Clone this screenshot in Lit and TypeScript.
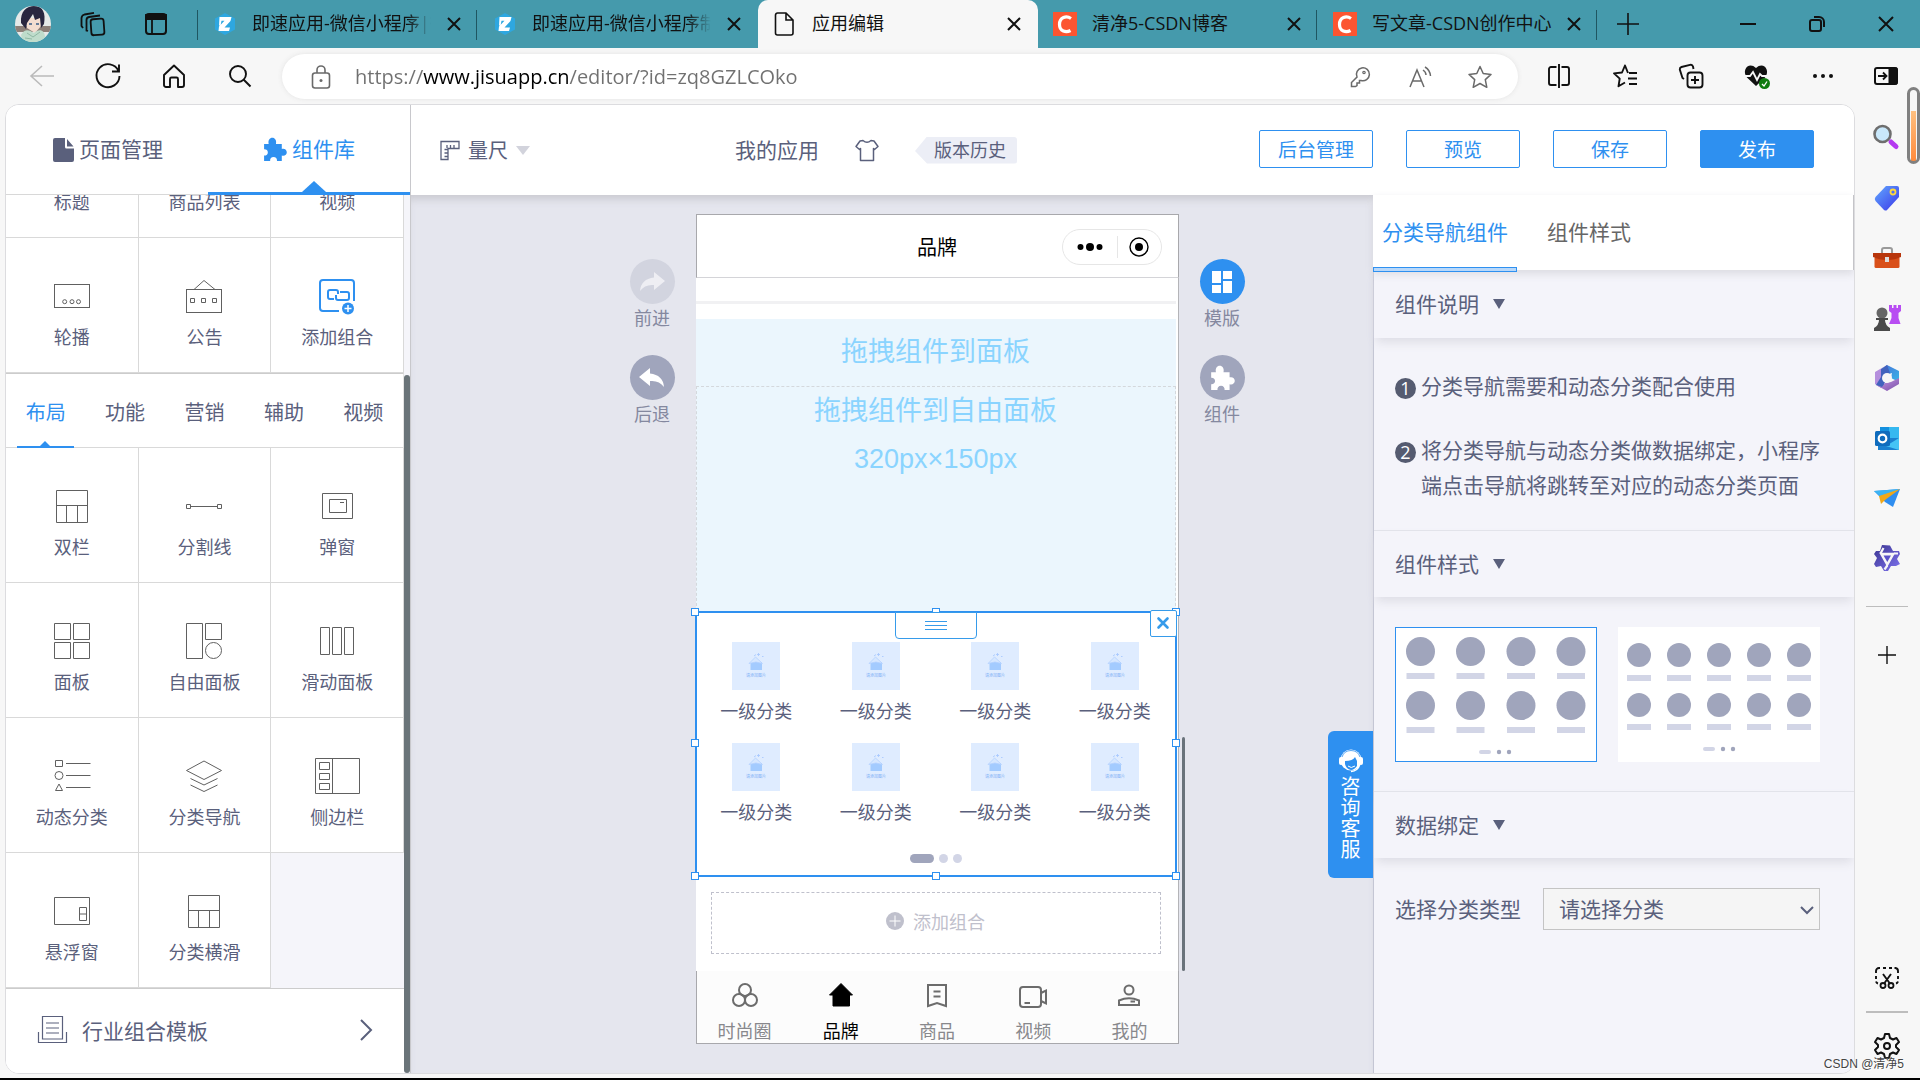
import { LitElement, html, css, svg, TemplateResult } from "lit";
import { customElement, state } from "lit/decorators.js";
import { classMap } from "lit/directives/class-map.js";

const icon = (w: number, h: number, body: unknown, cls = "") =>
  html`<svg class="ico ${cls}" width=${w} height=${h} viewBox="0 0 ${w} ${h}" aria-hidden="true">${body}</svg>`;

const base = css`
  :host, * { box-sizing: border-box; }
  button, select, input { font: inherit; color: inherit; margin: 0; padding: 0; border: 0; background: none; }
  button { cursor: pointer; }
  a { color: inherit; text-decoration: none; }
  .ico { display: block; flex: none; fill: none; stroke: currentColor; overflow: visible; }
`;

const puzzle = (size: number) => html`<svg class="ico" width=${size} height=${size} viewBox="0 0 24 24" aria-hidden="true">
  <path fill="currentColor" stroke="none" d="M2 6.600h4.400C5.600 3.200 7.500.8 9.900.8s4.300 2.400 3.500 5.800H19v4.800c2.700-.8 4.800.9 4.800 3.200s-2.100 4-4.800 3.200V23h-4.600c.2-2.400-1.200-3.900-3.300-3.900S7.600 20.600 7.800 23H2v-5.200c2.300.1 3.600-1.100 3.600-3s-1.300-3.100-3.600-3z"/>
</svg>`;

/* ---------- browser title bar and address bar ---------- */

const closeX = icon(14, 14, svg`<path d="M1 1L13 13M13 1L1 13" stroke-width="2"/>`);
const jisuLogo = icon(22, 24, svg`<path d="M11 1L21 6.500V17.500L11 23L1 17.500V6.500Z" fill="#2ea7e0" stroke="none"/><path d="M5.500 5H17.500L16.500 9L10.500 15.500H16L15 19H4.500L5 14.500L10.500 8.800H7.500L6.500 13.500H5Z" fill="#fff" stroke="none"/>`);
const csdnLogo = icon(22, 24, svg`<rect x="-1" width="24" height="24" fill="#fc5531" stroke="none"/><path d="M17 6.500C12.500 3.500 5.500 5 5.500 12.500C5.500 19.500 12 21 16.500 18.500" stroke="#fff" stroke-width="3.200"/>`);
const pageIcon = icon(22, 24, svg`<path d="M3.500 1H12L19 8V21A2 2 0 0 1 17 23H3.500A2 2 0 0 1 1.500 21V3A2 2 0 0 1 3.500 1ZM12 1V8H19" stroke-width="1.600"/>`);

interface Tab { title: string; logo: TemplateResult; active?: boolean; long?: boolean; }
const tabs: Tab[] = [
  { title: "即速应用-微信小程序|微信", logo: jisuLogo, long: true },
  { title: "即速应用-微信小程序制作", logo: jisuLogo, long: true },
  { title: "应用编辑", logo: pageIcon, active: true },
  { title: "清净5-CSDN博客", logo: csdnLogo },
  { title: "写文章-CSDN创作中心", logo: csdnLogo },
];

@customElement("browser-bar")
class BrowserBar extends LitElement {
  static styles = [base, css`
    :host { display: block; font-family: "Open Sans", "Noto Sans CJK SC", sans-serif; color: #111; }
    .titlebar { height: 48px; background: #459aac; display: flex; align-items: stretch; }
    .lead { width: 198px; display: flex; align-items: center; padding-left: 15px; gap: 39px; flex: none; }
    .lead .avatar { margin-right: -10px; }
    .tab { width: 280px; flex: 0 1 280px; min-width: 0; display: flex; align-items: center; padding: 0 17px 0 16px; gap: 16px; position: relative; }
    .tab::after { content: ""; position: absolute; right: 1px; top: 10px; width: 1px; height: 30px; background: #1f5661; }
    .tab.first::before { content: ""; position: absolute; left: -1px; top: 10px; width: 1px; height: 30px; background: #1f5661; }
    .tab.before::after, .tab.active::after { display: none; }
    .tab.active { background: #f7f7f7; border-radius: 10px 10px 0 0; }
    .tab .label { flex: 1; min-width: 0; text-align: left; font-size: 18px; line-height: 44px; height: 48px; padding-bottom: 3px; white-space: nowrap; display: block; }
    .tab .label.long { overflow: hidden; -webkit-mask-image: linear-gradient(90deg, #000 calc(100% - 24px), transparent); mask-image: linear-gradient(90deg, #000 calc(100% - 24px), transparent); }
    .plus { display: flex; align-items: center; width: 60px; justify-content: center; }
    .win { margin-left: auto; display: flex; }
    .win button { width: 69px; display: grid; place-items: center; }
    .toolbar { height: 56px; background: #f7f7f7; display: flex; align-items: center; }
    .nav { display: flex; width: 282px; padding-left: 9px; flex: none; }
    .nav button, .acts button { width: 66px; height: 44px; display: grid; place-items: center; }
    .nav .off { color: #bbb; }
    .address { flex: 1; height: 45px; background: #fff; border-radius: 23px; display: flex; align-items: center; padding: 0 8px 0 29px; box-shadow: 0 0 5px #e3e3e3; color: #6a6a6a; margin-top: 1px; }
    .address input { flex: 1; min-width: 0; height: 40px; margin-left: 24px; font-size: 20px; outline: none;
      background: linear-gradient(90deg, #707070 68px, #000 68px, #000 213px, #707070 213px); -webkit-background-clip: text; background-clip: text; -webkit-text-fill-color: transparent; }
    .address button { width: 60px; height: 40px; display: grid; place-items: center; }
    .acts { display: flex; padding-left: 8px; width: 402px; flex: none; }
    .acts button:last-child { width: 60px; }
  `];
  render() {
    return html`
      <header class="titlebar">
        <div class="lead">
          <svg class="ico avatar" width="36" height="36" viewBox="0 0 36 36" aria-hidden="true">
            <defs><clipPath id="av"><circle cx="18" cy="18" r="18"/></clipPath></defs>
            <g clip-path="url(#av)" stroke="none">
              <rect width="36" height="36" fill="#e6e9e8"/><rect y="20" width="36" height="6" fill="#8d7f78"/>
              <path d="M10 12H26V20L20 27L12 22Z" fill="#f3ddd0"/>
              <path d="M6 17C5 5 12 0 19 0C28 0 31 7 29 18L26 22L25 12L20 14L18 8L12 17L11 23Z" fill="#29263f"/>
              <path d="M6 29C10 22 14 24 19 27C24 22 30 24 30 31L27 36H8Z" fill="#bfdccb"/>
              <path d="M12 27L18 31L25 26M10 32L17 33" stroke="#8fb8a3" fill="none"/>
              <path d="M14 18H17M21 18H24" stroke="#3a5c86" stroke-width="1.500"/>
            </g>
          </svg>
          ${icon(26, 24, svg`<rect x="11" y="7" width="13" height="16" rx="2.500" transform="rotate(-4 17 15)" stroke-width="1.800"/><path d="M8 19L6.500 18.500V8A3 3 0 0 1 9 5L20 3.500M3 16L1.500 14V6A4 4 0 0 1 4.500 2.500L14 .8" stroke-width="1.800"/>`)}
          ${icon(22, 22, svg`<rect x="1" y="1" width="20" height="20" rx="3" stroke-width="2"/><path d="M1 2H21V6H1ZM7 6V21" fill="currentColor" stroke-width="1.800"/>`)}
        </div>
        ${tabs.map((t, i) => html`
          <div class="tab ${classMap({ active: !!t.active, first: i === 0, before: i === 1 })}">
            ${t.logo}<button class="label ${t.long ? "long" : ""}" role="tab" aria-selected=${t.active ? "true" : "false"}>${t.title}</button>
            <button aria-label="关闭标签页">${closeX}</button>
          </div>`)}
        <button class="plus" aria-label="新建标签页">${icon(22, 22, svg`<path d="M11 0V22M0 11H22" stroke-width="1.600"/>`)}</button>
        <div class="win">
          <button aria-label="最小化">${icon(16, 16, svg`<path d="M0 8H16" stroke-width="2"/>`)}</button>
          <button aria-label="还原">${icon(16, 16, svg`<rect x="1" y="4" width="11" height="11" rx="2" stroke-width="2"/><path d="M5 1H10A5 5 0 0 1 15 6V11" stroke-width="2"/>`)}</button>
          <button aria-label="关闭">${icon(16, 16, svg`<path d="M1 1L15 15M15 1L1 15" stroke-width="2"/>`)}</button>
        </div>
      </header>
      <div class="toolbar">
        <nav class="nav">
          <button class="off" aria-label="后退">${icon(24, 22, svg`<path d="M24 11H1M12 1L1 11L12 21" stroke-width="1.600"/>`)}</button>
          <button aria-label="刷新">${icon(26, 26, svg`<path d="M23.500 8A11.500 11.500 0 1 0 24.500 13M24 1.500V8.500H17" stroke-width="1.900"/>`)}</button>
          <button aria-label="主页">${icon(22, 24, svg`<path d="M1 11L11 1.500L21 11V21A2 2 0 0 1 19 23H15V15A1.500 1.500 0 0 0 13.500 13.500H8.500A1.500 1.500 0 0 0 7 15V23H3A2 2 0 0 1 1 21Z" stroke-width="1.900" stroke-linejoin="round"/>`)}</button>
          <button aria-label="搜索">${icon(22, 22, svg`<circle cx="9" cy="9" r="8" stroke-width="1.900"/><path d="M14.500 14.500L21.500 21.500" stroke-width="1.900"/>`)}</button>
        </nav>
        <div class="address">
          ${icon(20, 24, svg`<rect x="1.500" y="8" width="17" height="15" rx="2.500" stroke-width="1.600"/><path d="M6 8V5A4 4 0 0 1 14 5V8" stroke-width="1.600"/><circle cx="10" cy="15.500" r="1.500" fill="currentColor" stroke="none"/>`)}
          <input aria-label="地址栏" spellcheck="false" value="https://www.jisuapp.cn/editor/?id=zq8GZLCOko" />
          <button aria-label="密码">${icon(20, 20, svg`<path d="M7 10A6.500 6.500 0 1 1 11 13.500H9.500V16H7V18.500L5.500 19.500H1.500V15.500Z" stroke-width="1.500"/><circle cx="14" cy="5.500" r="1.200" stroke-width="1.200"/>`)}</button>
          <button aria-label="朗读">${icon(22, 22, svg`<path d="M1 21L8 4L15 21M3.500 15H12.500M14 4Q17 6 17 9M16 1Q21 4 21.500 10" stroke-width="1.500"/>`)}</button>
          <button aria-label="收藏">${icon(24, 24, svg`<path d="M12 1.500L15.200 8.500L23 9.400L17.300 14.600L18.800 22.300L12 18.500L5.200 22.300L6.700 14.600L1 9.400L8.800 8.500Z" stroke-width="1.500" stroke-linejoin="round"/>`)}</button>
        </div>
        <div class="acts">
          <button aria-label="拆分窗口">${icon(22, 24, svg`<path d="M11 0V24M8.500 3H3A2 2 0 0 0 1 5V19A2 2 0 0 0 3 21H8.500M13.500 3H19A2 2 0 0 1 21 5V19A2 2 0 0 1 19 21H13.500" stroke-width="1.900"/>`)}</button>
          <button aria-label="收藏夹">${icon(24, 24, svg`<path d="M15 9L12 1.500L9 8.500L1 9.400L6.700 14.600L5.500 22.300L12 18.500M16 9H24M15 14.500H24M16 20H24" stroke-width="1.900" stroke-linejoin="round"/>`)}</button>
          <button aria-label="集锦">${icon(24, 24, svg`<rect x="8.500" y="8.500" width="15" height="15" rx="3" stroke-width="1.900"/><path d="M16 12V20M12 16H20M5 15L3.500 14L.8 5.500A2.500 2.500 0 0 1 2.500 3L11 .8A2.500 2.500 0 0 1 14 2.500L14.500 5" stroke-width="1.900"/>`)}</button>
          <button aria-label="浏览器概要">${icon(26, 24, svg`<path d="M12 22L3 13.500C-3 6 5-3 12 4C19-3 27 6 21 13.500Z" fill="currentColor" stroke="none"/><path d="M0 12H6L9 8L13 16L16 10L18 12H24" stroke="#f7f7f7" stroke-width="1.800"/><circle cx="20.500" cy="19.500" r="5.500" fill="#107c10" stroke="none"/><path d="M18 20L20 22L23 17.500" stroke="#fff" stroke-width="1.300"/>`)}</button>
          <button aria-label="更多">${icon(22, 6, svg`<g fill="currentColor" stroke="none"><circle cx="3" cy="3" r="2"/><circle cx="11" cy="3" r="2"/><circle cx="19" cy="3" r="2"/></g>`)}</button>
          <button aria-label="侧栏">${icon(24, 18, svg`<rect x="1" y="1" width="22" height="16" rx="2" stroke-width="2"/><path d="M15 1H23V17H15Z" fill="currentColor"/><path d="M4 9H12M9 5.500L12.500 9L9 12.500" stroke-width="1.800"/>`)}</button>
        </div>
      </div>`;
  }
}

/* ---------- left component library ---------- */

const cellIcons: Record<string, unknown> = {
  轮播: svg`<rect x=".5" y="6.500" width="35" height="23"/><circle cx="10.700" cy="23.700" r="2"/><circle cx="18" cy="23.700" r="2"/><circle cx="24.500" cy="23.700" r="2"/>`,
  公告: svg`<rect x=".5" y="11.500" width="35" height="23"/><path d="M8 11.500L18 2.500L29 11.500"/><path d="M4.500 20.500H8.500V24.500H4.500ZM15.500 20.500H19.500V24.500H15.500ZM26.500 20.500H30.500V24.500H26.500Z"/>`,
  添加组合: svg`<g stroke="#2e90f0" stroke-width="2"><path d="M20 33H4A3 3 0 0 1 1 30V5A3 3 0 0 1 4 2H32A3 3 0 0 1 35 5V23"/><path d="M15 21H11A2 2 0 0 1 9 19V14A2 2 0 0 1 11 12H17A2 2 0 0 1 19 14V16M21 14H28A2 2 0 0 1 30 16V20A2 2 0 0 1 28 22H19A2 2 0 0 1 17 20V17"/></g><circle cx="29" cy="30.500" r="6" fill="#2e90f0" stroke="none"/><path d="M29 27V34M25.500 30.500H32.500" stroke="#fff" stroke-width="1.500"/>`,
  双栏: svg`<path d="M2.500 2.500H33.500V34.500H2.500ZM2.500 17.500H33.500M12.500 17.500V34.500M23.500 17.500V34.500"/>`,
  分割线: svg`<path d="M.5 16.500H4.500V20.500H.5ZM31.500 16.500H35.500V20.500H31.500ZM4.500 18.500H31.500"/>`,
  弹窗: svg`<path d="M3.500 5.500H33.500V30.500H3.500ZM10.500 11.500H27.500V24.500H10.500ZM21 14.500H25"/>`,
  面板: svg`<path d="M.5 .5H16.500V16.500H.5ZM19.500 .5H35.500V16.500H19.500ZM.5 19.500H16.500V35.500H.5ZM19.500 19.500H35.500V35.500H19.500Z"/>`,
  自由面板: svg`<path d="M.5 .5H16.500V35.500H.5ZM19.500 .5H35.500V16.500H19.500Z"/><circle cx="27.500" cy="27.500" r="8"/>`,
  滑动面板: svg`<path d="M1.500 4.500H10.500V31.500H1.500ZM13.500 4.500H22.500V31.500H13.500ZM25.500 4.500H34.500V31.500H25.500Z"/>`,
  动态分类: svg`<path d="M1.500 2.500H8.500V8.500H1.500ZM12 5.500H36.500M12 17.500H36.500M12 29.500H36.500M5 26L8.500 32.500H1.500Z"/><circle cx="5" cy="17.500" r="4"/>`,
  分类导航: svg`<path d="M18 3L35.500 12.500L18 21.500L.5 12.500ZM4.500 20.500L18 27L31.500 20.500M4.500 27L18 33.500L31.500 27"/>`,
  侧边栏: svg`<path d="M-3.500 .5H40.500V35.500H-3.500ZM13.500 .5V35.500M.5 4.500H10.500V11.500H.5ZM.5 15.500H10.500V21.500H.5ZM.5 25.500H10.500V31.500H.5Z"/>`,
  悬浮窗: svg`<path d="M.5 4.500H35.500V31.500H.5ZM25.500 14.500H32.500V27.500H25.500ZM25.500 21H32.500"/>`,
};
cellIcons["分类横滑"] = cellIcons["双栏"];

@customElement("component-library")
class ComponentLibrary extends LitElement {
  @state() private category = "布局";
  static styles = [base, css`
    :host { display: flex; flex-direction: column; width: 405px; flex: none; border-right: 1px solid #c8c8cc; background: #fff; color: #5a607c; }
    .top { display: grid; grid-template-columns: 1fr 1fr; height: 90px; border-bottom: 1px solid #d8d8d8; }
    .top button { display: flex; align-items: center; font-size: 21px; line-height: 30px; padding-bottom: 3px; gap: 5px; }
    .top .pages { padding-left: 47px; }
    .top .lib { color: #2e90f0; padding-left: 54px; position: relative; }
    .top .lib::before { content: ""; position: absolute; left: 0; right: 0; bottom: -1px; height: 3px; background: #2e90f0; }
    .top .lib::after { content: ""; position: absolute; left: 94px; bottom: 2px; border: 12px solid transparent; border-top: 0; border-bottom: 11px solid #2e90f0; }
    .top .ico { margin-top: 3px; }
    .body { flex: 1; display: flex; flex-direction: column; background: #f5f5fa; padding-right: 6px; position: relative; }
    .bar { position: absolute; right: 0; top: 180px; bottom: 0; width: 6px; border-radius: 3px; background: #6a7479; }
    .grid { display: grid; grid-template-columns: repeat(3, 1fr); }
    .cell { height: 135px; display: flex; flex-direction: column; align-items: center; justify-content: flex-end; padding-bottom: 24px; gap: 10px; font-size: 18px; line-height: 24px; background: #fff; border-right: 1px solid #d9d9d9; border-bottom: 1px solid #d9d9d9; overflow: hidden; white-space: nowrap; }
    .cell .ico { color: #606060; }
    .cell.cut { height: 43px; }
    .cats { display: grid; grid-template-columns: repeat(5, 1fr); height: 75px; border-top: 1px solid #ccc; border-bottom: 1px solid #d9d9d9; background: #fff; border-right: 1px solid #e4e4e4; }
    .cats button { font-size: 20px; line-height: 30px; padding-top: 2px; position: relative; }
    .cats .on { color: #2e90f0; }
    .cats .on::before { content: ""; position: absolute; left: 11px; right: 11px; bottom: -1px; height: 2px; background: #2e90f0; }
    .cats .on::after { content: ""; position: absolute; left: calc(50% - 7px); bottom: 0; border: 6px solid transparent; border-top: 0; border-bottom-color: #2e90f0; }
    .foot { flex: 1; min-height: 84px; display: flex; align-items: center; background: #fff; border-top: 1px solid #ccc; padding: 0 32px 2px 32px; font-size: 21px; line-height: 30px; gap: 15px; }
    .foot .more { margin-left: auto; }
  `];
  private cell(name: string) {
    return html`<button class="cell">${icon(36, 36, cellIcons[name])}<span>${name}</span></button>`;
  }
  render() {
    const layout = ["双栏", "分割线", "弹窗", "面板", "自由面板", "滑动面板", "动态分类", "分类导航", "侧边栏", "悬浮窗", "分类横滑"];
    return html`
      <div class="top" role="tablist">
        <button class="pages" role="tab" aria-selected="false">
          ${icon(21, 24, svg`<path d="M2 0H12V9A1.500 1.500 0 0 0 13.500 10.500H21V22A2 2 0 0 1 19 24H2A2 2 0 0 1 0 22V2A2 2 0 0 1 2 0ZM14 1L20.500 8.500H14Z" fill="currentColor" stroke="none"/>`)}页面管理
        </button>
        <button class="lib" role="tab" aria-selected="true">${puzzle(25)}组件库</button>
      </div>
      <div class="body">
        <div class="grid">
          ${["标题", "商品列表", "视频"].map((n) => html`<button class="cell cut"><span>${n}</span></button>`)}
          ${["轮播", "公告", "添加组合"].map((n) => this.cell(n))}
        </div>
        <div class="cats" role="tablist">
          ${["布局", "功能", "营销", "辅助", "视频"].map((n) => html`
            <button role="tab" class=${n === this.category ? "on" : ""} aria-selected=${n === this.category ? "true" : "false"} @click=${() => (this.category = n)}>${n}</button>`)}
        </div>
        <div class="grid">${layout.map((n) => this.cell(n))}</div>
        <button class="foot">
          ${icon(29, 28, svg`<path d="M4.500 .5H24.500V23H4.500ZM8 7H21M8 12H21M8 17H21M.5 16V26.500H28.500V16" stroke-width="1.200"/>`)}
          行业组合模板
          ${icon(12, 22, svg`<path d="M1 1L11 11L1 21" stroke-width="2"/>`, "more")}
        </button>
        <div class="bar"></div>
      </div>`;
  }
}

/* ---------- phone preview ---------- */

@customElement("phone-preview")
class PhonePreview extends LitElement {
  static styles = [base, css`
    :host { display: block; width: 483px; position: relative; color: #5a607c; }
    .head { height: 64px; border: 1px solid #a8a8ac; border-bottom-color: #d4d4d8; background: #fff; display: grid; grid-template-columns: 1fr auto 1fr; align-items: center; color: #000; font-size: 20px; line-height: 30px; padding-top: 1px; }
    .capsule { justify-self: end; margin-right: 16px; width: 100px; height: 36px; border: 1px solid #e6e6e6; border-radius: 18px; display: grid; grid-template-columns: 54px 1fr; align-items: center; justify-items: center; }
    .capsule button { width: 100%; height: 22px; display: grid; place-items: center; }
    .capsule button + button { border-left: 1px solid #e6e6e6; }
    .scroll { background: #fff; border-right: 1px solid #b4b4b8; padding: 23px 2px 17px 0; }
    .rule { height: 3px; background: #f1f1f3; margin-bottom: 15px; }
    .drop { background: #ebf6fd; color: #8ad4ff; font: 27px/48px "Liberation Sans", "Noto Sans CJK SC", sans-serif; text-align: center; }
    .panel { height: 67px; line-height: 66px; }
    .free { height: 225px; border: 1px dashed #d4d8dc; border-bottom: 0; }
    .block { position: relative; margin: 0 -1px; border: 2px solid #2e90f0; padding: 29px 0 12px; background: #fff; }
    .items { display: grid; grid-template-columns: repeat(4, 1fr); row-gap: 21px; }
    .item { display: flex; flex-direction: column; align-items: center; gap: 8px; font-size: 18px; line-height: 24px; }
    .pic { display: block; background: #dfecff; }
    .tiny { font: 4px "Noto Sans CJK SC", sans-serif; fill: #7fb0f6; }
    .pager { display: flex; justify-content: center; gap: 5px; margin-top: 31px; }
    .pager i { width: 9px; height: 9px; border-radius: 5px; background: #d2d5e6; }
    .pager i.on { width: 24px; background: #a0a5bc; }
    .grip { position: absolute; left: 50%; top: -1px; margin-left: -41px; width: 82px; height: 27px; border: 1px solid #369bea; border-radius: 0 0 4px 4px; background: #fff; display: grid; place-items: center; color: #369bea; }
    .close { position: absolute; right: -2px; top: -3px; width: 27px; height: 27px; border: 1px solid #369bea; border-radius: 2px; background: #fff; display: grid; place-items: center; color: #369bea; padding-bottom: 2px; }
    .h { position: absolute; width: 8px; height: 8px; border: 1px solid #2e90f0; background: #fff; }
    .n { top: -5px; } .s { bottom: -5px; } .m { top: calc(50% - 5px); }
    .w { left: -6px; } .e { right: -5px; } .c { left: calc(50% - 4px); }
    .add { width: calc(100% - 30px); height: 62px; margin: 15px 15px 0; border: 1px dashed #bfc0cc; display: flex; align-items: center; justify-content: center; gap: 9px; color: #bfc0cc; font-size: 18px; line-height: 24px; padding-bottom: 4px; }
    .tabs { height: 73px; background: #fcfcfc; border: 1px solid #a8a8ac; border-top: 0; display: grid; grid-template-columns: repeat(5, 1fr); }
    .tabs a { display: flex; flex-direction: column; align-items: center; justify-content: flex-end; font-size: 18px; line-height: 24px; gap: 10px; padding-bottom: 1px; color: #88888c; }
    .tabs a .ico { color: #6c6c6c; }
    .tabs a.on, .tabs a.on .ico { color: #000; }
    .bar { position: absolute; right: -6px; top: 523px; bottom: 73px; width: 3px; border-radius: 2px; background: #6a737b; }
  `];
  private pic() {
    return html`<svg class="pic" width="48" height="48" viewBox="0 0 48 48" role="img" aria-label="请添加图片">
      <rect x="18.500" y="20" width="11.500" height="8" fill="#a3cbff"/><path d="M17 21.500L23.500 15L30.500 21.500L24 20Z" fill="#d6e7ff" stroke="#b3d0ff" stroke-width=".8"/>
      <path d="M26.500 11V14M25 12.500H28M30 14.500H31.500M22 14L24 12.500" stroke="#a9c9ff" stroke-width=".9"/>
      <text class="tiny" x="14" y="34.500">请添加图片</text></svg>`;
  }
  render() {
    const nav: [string, unknown][] = [
      ["时尚圈", svg`<circle cx="14" cy="8" r="6"/><circle cx="8" cy="18" r="6"/><circle cx="20" cy="18" r="6"/>`],
      ["品牌", svg`<path d="M14 1.500L2.500 13H6V24H22.500V13H25.500Z" fill="currentColor" stroke-linejoin="round" stroke-width="1"/>`],
      ["商品", svg`<path d="M5 3H23V24L14 21L5 24ZM10.500 9.500H17.500M10.500 14.500H17.500"/>`],
      ["视频", svg`<rect x="1" y="5" width="21" height="20" rx="3"/><path d="M22 11L27 8.500V21.500L22 19M5.500 21H11"/>`],
      ["我的", svg`<circle cx="14" cy="8" r="4.500"/><path d="M4 23V18.500Q14 14 24 18.500V23ZM15.500 19.500H20"/>`],
    ];
    return html`
      <div class="head">
        <span></span><span>品牌</span>
        <div class="capsule">
          <button aria-label="更多">${icon(26, 10, svg`<g fill="#000" stroke="none"><circle cx="3.500" cy="5" r="3"/><circle cx="13" cy="5" r="4"/><circle cx="22.500" cy="5" r="3"/></g>`)}</button>
          <button aria-label="关闭小程序">${icon(20, 20, svg`<circle cx="10" cy="10" r="9" stroke="#000" stroke-width="1.400"/><circle cx="10" cy="10" r="4" fill="#000" stroke="none"/>`)}</button>
        </div>
      </div>
      <div class="scroll">
        <div class="rule"></div>
        <div class="drop panel">拖拽组件到面板</div>
        <div class="drop free">拖拽组件到自由面板<br />320px×150px</div>
        <section class="block">
          <div class="items">${Array.from({ length: 8 }, () => html`<div class="item">${this.pic()}<span>一级分类</span></div>`)}</div>
          <div class="pager"><i class="on"></i><i></i><i></i></div>
          ${["n w", "n c", "n e", "m w", "m e", "s w", "s c", "s e"].map((p) => html`<span class="h ${p}"></span>`)}
          <button class="grip" aria-label="拖动">${icon(22, 9, svg`<path d="M0 .5H22M0 4.500H22M0 8.500H22"/>`)}</button>
          <button class="close" aria-label="删除">${icon(12, 12, svg`<path d="M1.500 1.500L10.500 10.500M10.500 1.500L1.500 10.500" stroke-width="2.600" stroke-linecap="round"/>`)}</button>
        </section>
        <button class="add">${icon(18, 18, svg`<circle cx="9" cy="9" r="9" fill="#bfc0cc" stroke="none"/><path d="M9 3.500V14.500M3.500 9H14.500" stroke="#fff"/>`)}添加组合</button>
      </div>
      <nav class="tabs">
        ${nav.map(([n, d]) => html`<a href="#" class=${n === "品牌" ? "on" : ""}><svg class="ico" width="28" height="26" viewBox="0 0 28 26" stroke-width="2" aria-hidden="true">${d}</svg>${n}</a>`)}
      </nav>
      <div class="bar"></div>`;
  }
}

/* ---------- right settings panel ---------- */

const thumb = (xs: number[], ys: number[], bars: number[], r: number, w: number, pagerX: number, pagerY: number) =>
  html`<svg class="ico" width="202" height="135" viewBox="0 0 202 135" aria-hidden="true"><g stroke="none">
    ${ys.map((y, i) => xs.map((x) => svg`<circle cx=${x} cy=${y} r=${r} fill="#a0a5bc"/><rect x=${x - w / 2} y=${bars[i]} width=${w} height="6" fill="#d2d5e6"/>`))}
    <rect x=${pagerX} y=${pagerY - 2} width="12" height="4" rx="2" fill="#d2d5e6"/><circle cx=${pagerX + 20} cy=${pagerY} r="2.200" fill="#a0a5bc"/><circle cx=${pagerX + 30} cy=${pagerY} r="2.200" fill="#a0a5bc"/>
  </g></svg>`;

@customElement("settings-panel")
class SettingsPanel extends LitElement {
  @state() private style4 = true;
  static styles = [base, css`
    :host { display: block; width: 481px; flex: none; background: #f4f4fa; color: #5a607c; font-size: 21px; line-height: 35px; position: relative; border-left: 1px solid #c4c6d4; }
    .tabs { display: flex; gap: 20px; height: 75px; margin-left: -1px; background: #fff; border-right: 1px solid #c4c4c8; box-shadow: 0 4px 8px #dcdce2; position: relative; }
    .tabs button { padding: 0 10px 3px; color: #666; position: relative; }
    .tabs .on { color: #2e90f0; width: 144px; padding-left: 9px; text-align: left; white-space: nowrap; }
    .tabs .on::after { content: ""; position: absolute; left: 0; right: 0; bottom: -2px; height: 3px; border: 1px solid #2e90f0; background: #b8d8fa; }
    .sec { width: 100%; height: 67px; display: flex; align-items: center; gap: 14px; padding: 0 21px 2px; box-shadow: 0 6px 10px -2px #dcdce4; border-top: 1px solid #e2e3ea; }
    .sec.first { height: 68px; border-top: 0; }
    .sec i { border: 6px solid transparent; border-top: 10px solid #5a607c; border-bottom: 0; margin-top: 2px; }
    ol { list-style: none; margin: 0; padding: 30px 21px 28px; display: grid; gap: 29px; }
    li { display: flex; gap: 5px; }
    .num { flex: none; width: 21px; height: 21px; border-radius: 50%; margin-top: 10px; background: #555b70; color: #fff; font: 18px/21px "Open Sans", sans-serif; text-align: center; }
    .thumbs { display: grid; grid-template-columns: 202px 202px; gap: 21px; padding: 30px 21px 29px; }
    .thumbs button { height: 135px; background: #fff; }
    .thumbs button.on { outline: 1px solid #2e90f0; outline-offset: -1px; }
    .field { display: flex; align-items: center; justify-content: space-between; padding: 30px 34px 30px 21px; }
    .field label { padding-bottom: 2px; }
    .pick { position: relative; width: 277px; display: block; }
    .pick select { appearance: none; display: block; width: 100%; height: 42px; border: 1px solid #c4c4c4; background: #f5f5f5; padding: 0 30px 2px 15px; }
    .pick .ico { position: absolute; right: 6px; top: 18px; pointer-events: none; }
    .service { position: absolute; left: -46px; top: 536px; width: 45px; height: 147px; border-radius: 6px 0 0 6px; background: #2e90f0; color: #fff; font-size: 20px; line-height: 21px; display: flex; flex-direction: column; align-items: center; padding: 18px 12px 0; gap: 2px; }
    .service span { width: 21px; word-break: break-all; }
  `];
  render() {
    return html`
      <div class="tabs" role="tablist">
        <button class="on" role="tab" aria-selected="true">分类导航组件</button>
        <button role="tab" aria-selected="false">组件样式</button>
      </div>
      <button class="sec first">组件说明<i></i></button>
      <ol>
        <li><span class="num">1</span><span>分类导航需要和动态分类配合使用</span></li>
        <li><span class="num">2</span><span>将分类导航与动态分类做数据绑定，小程序端点击导航将跳转至对应的动态分类页面</span></li>
      </ol>
      <button class="sec">组件样式<i></i></button>
      <div class="thumbs">
        <button aria-label="每行四个" class=${this.style4 ? "on" : ""} @click=${() => (this.style4 = true)}>${thumb([25.5, 75.5, 126, 176], [24.5, 78.5], [46, 100], 14.5, 28, 84, 125)}</button>
        <button aria-label="每行五个" class=${this.style4 ? "" : "on"} @click=${() => (this.style4 = false)}>${thumb([21, 61, 101, 141, 181], [28, 78], [48, 97], 12, 24, 85, 122)}</button>
      </div>
      <button class="sec">数据绑定<i></i></button>
      <div class="field">
        <label for="kind">选择分类类型</label>
        <div class="pick">
          <select id="kind"><option>请选择分类</option></select>
          ${icon(14, 8, svg`<path d="M1 1L7 7L13 1" stroke-width="2"/>`)}
        </div>
      </div>
      <button class="service">
        ${icon(24, 24, svg`<g stroke="none"><circle cx="12" cy="11" r="10.500" fill="#fff"/><rect y="8" width="4" height="8" rx="2" fill="#fff"/><rect x="20" y="8" width="4" height="8" rx="2" fill="#fff"/><path d="M6 12Q14 12 16 8L18 12V17Q15 21 12 21Q7 20 6 15Z" fill="#2e90f0"/><path d="M9 17Q12 20 16 17" stroke="#fff" fill="none"/></g><path d="M3 8A9.500 9.500 0 0 1 21 8" stroke="#2e90f0" stroke-width=".8"/><path d="M12 22.500Q19 22 21 15" stroke="#fff" stroke-width="1.300"/>`)}
        <span>咨询客服</span>
      </button>`;
  }
}

/* ---------- browser side strip ---------- */

@customElement("side-strip")
class SideStrip extends LitElement {
  static styles = [base, css`
    :host { display: flex; flex-direction: column; width: 65px; flex: none; align-items: center; color: #111; position: relative; padding: 4px 2px 2px 0; }
    button { width: 40px; height: 60px; display: grid; place-items: center; flex: none; }
    hr { width: 42px; border: 0; border-top: 1px solid #bdbdbd; margin: 0; }
    .line { margin: 18px 0 18px; }
    .bottom { margin-top: auto; display: flex; flex-direction: column; align-items: center; }
    .bottom hr { border-top-width: 2px; margin: 3px 0; }
    .thumb { position: absolute; right: 0; top: -17px; width: 13px; height: 77px; border: 3px solid #808080; border-radius: 7px; background: linear-gradient(#ffc080, #ff8a3c) 50% 100% / 5px 50px no-repeat #f7f7f7; }
    .mark { position: absolute; right: 16px; bottom: 4px; font: 12px/20px "Liberation Sans", "Noto Sans CJK SC", sans-serif; white-space: nowrap; color: #444; text-shadow: 0 0 2px #fff, 1px 1px 0 #fff; }
  `];
  render() {
    const g = (id: string, a: string, b: string) => svg`<linearGradient id=${id} x1="0" y1="0" x2="1" y2="1"><stop offset="0" stop-color=${a}/><stop offset="1" stop-color=${b}/></linearGradient>`;
    const apps: [string, unknown][] = [
      ["搜索", svg`<circle cx="9.500" cy="10" r="8" fill="#c9e8fb" stroke="#6e6e6e" stroke-width="2.600"/><path d="M18 18L23 22.500" stroke="#b43af0" stroke-width="5" stroke-linecap="round"/>`],
      ["购物", svg`${g("a", "#62a9ff", "#3a36e8")}<path d="M13 2L24 2Q26 2 26 4V13L14 26Q13 27 11 26L2.500 17Q1 15 2.500 13Z" fill="url(#a)" stroke="none"/><circle cx="20" cy="8" r="2.500" stroke="#ffd83d" stroke-width="1.800"/>`],
      ["工具", svg`<path d="M9 9V6A2 2 0 0 1 11 4H17A2 2 0 0 1 19 6V9" stroke="#9a9a9a" stroke-width="2"/><rect x="1.500" y="13" width="25" height="11" rx="1.500" fill="#d9501a" stroke="none"/><path d="M0 9H28V13Q22 16 14 16Q6 16 0 13Z" fill="#b8360c" stroke="none"/><rect x="12" y="13" width="4" height="5" fill="#ddd" stroke="none"/>`],
      ["游戏", svg`<g stroke="none"><path d="M16 1H19V4H20.500V1H23.500V4H25V1H28V7L25.500 9V14L27.500 20H16L18.500 14V9L16 7Z" fill="#b84df2"/><circle cx="9" cy="9" r="5.500" fill="#666"/><path d="M3 14H15V16H12Q12 21 17 24V27H1V24Q6 21 6 16H3Z" fill="#4a4a4a"/></g>`],
      ["Microsoft 365", svg`${g("b", "#4a6fd8", "#35b7e8")}${g("c", "#c79be6", "#7a4fa8")}<g stroke="none"><path d="M14 1L26 7V18L18 14L19 9L10 12L8 6Z" fill="url(#b)"/><path d="M14 1L8 5L10 17L8 24L2 20V8Z" fill="#b58fdd"/><path d="M14 1L8 5V13L3 21L10 24L12 18L10 13L17 9Z" fill="#4263bd"/><path d="M3 21L14 27L26 20V14L18 18L12 19L9 23Z" fill="url(#c)"/><circle cx="14" cy="14" r="5" fill="#f7f7f7"/></g>`],
      ["Outlook", svg`<g stroke="none"><rect x="7" y="3" width="19" height="14" fill="#35b8f0"/><rect x="7" y="3" width="9" height="8" fill="#1490df"/><path d="M5 14L26 14V26H5Z" fill="#1a80d0"/><path d="M26 14L13 22L26 26Z" fill="#45c4f5"/><rect x="2" y="7" width="15" height="15" rx="1.500" fill="#0f6cbd"/></g><circle cx="9.500" cy="14.500" r="3.800" stroke="#fff" stroke-width="2.200"/>`],
      ["Drop", svg`<g stroke="none"><path d="M1 7L27 5L20 23L12 18Z" fill="#2f8ef0"/><path d="M1 7L27 5L8 13Z" fill="#3cb4f2"/><path d="M27 5L6 12L8 20L12 16Z" fill="#f0a818"/></g>`],
      ["AI 助手", svg`${g("d", "#3b3590", "#7f74f0")}<path d="M9 1L17 1.500L20 7H26L27 10L24 15L27 20L23 22H18L15 27H11L8 22L3 23L1 20L4 14L1 10L3 7H7Z" fill="url(#d)" stroke="none"/><path d="M7.500 9.500H21L14.300 21.500Z" fill="#f7f7f7" stroke="#f7f7f7" stroke-width="1.500"/><path d="M7.500 9.500L10.500 4M21 9.500H25M14.300 21.500L11.500 25.500" stroke="#f7f7f7" stroke-width="2.200"/><path d="M10.500 11.500H18L14.300 18Z" fill="#5a52c8" stroke="none"/>`],
    ];
    return html`
      ${apps.map(([n, d]) => html`<button aria-label=${n}>${icon(28, 28, d)}</button>`)}
      <hr class="line" />
      <button aria-label="自定义">${icon(18, 18, svg`<path d="M9 0V18M0 9H18" stroke-width="1.400"/>`)}</button>
      <div class="bottom">
        <button aria-label="截图">${icon(24, 22, svg`<path d="M1 6V4A3 3 0 0 1 4 1H5M8 1H11M14 1H17M19.500 1H20.500A3 3 0 0 1 23 4V6M1 9V12M23 9V12M1 14.500A3 3 0 0 0 3 16.500M23 14.500A3 3 0 0 1 21 16.500M8 7L14.500 16M16 7L9.500 16" stroke-width="1.900"/><circle cx="8" cy="18.500" r="2.500" stroke-width="1.800"/><circle cx="16" cy="18.500" r="2.500" stroke-width="1.800"/>`)}</button>
        <hr />
        <button aria-label="设置">${icon(26, 26, svg`<path d="M11 1H15L16 5L19 6.500L22.500 5L25 9L22 12V14L25 17L22.500 21L19 19.500L16 21L15 25H11L10 21L7 19.500L3.500 21L1 17L4 14V12L1 9L3.500 5L7 6.500L10 5Z" stroke-width="2" stroke-linejoin="round"/><circle cx="13" cy="13" r="3" stroke-width="2"/>`)}</button>
      </div>
      <div class="thumb"></div>
      <span class="mark">CSDN @清净5</span>`;
  }
}

/* ---------- page ---------- */

@customElement("app-root")
class AppRoot extends LitElement {
  static styles = [base, css`
    :host { display: flex; flex-direction: column; min-height: 100vh; background: #f7f7f7; font-family: "Noto Sans CJK SC", sans-serif; color: #5a607c; border-bottom: 2px solid #000; }
    .row { flex: 1; display: flex; padding-left: 5px; }
    .card { flex: 1; min-width: 0; display: flex; border: 1px solid #dcdcdf; border-radius: 14px; overflow: hidden; background: #fff; margin-bottom: 4px; }
    .main { flex: 1; min-width: 0; display: flex; flex-direction: column; }
    .head { height: 90px; display: flex; align-items: center; padding: 0 40px 0 29px; background: #fff; flex: none; }
    .ruler { display: flex; align-items: center; gap: 8px; font-size: 20px; line-height: 30px; }
    .ruler i { border: 7px solid transparent; border-top: 9px solid #d2d3dc; border-bottom: 0; }
    .title { display: flex; align-items: center; margin-left: 205px; font-size: 21px; line-height: 30px; gap: 36px; }
    .title > span { padding-bottom: 3px; }
    .title .version { width: 102px; height: 27px; line-height: 24px; background: #eceef6; clip-path: polygon(12px 0, 100% 0, 100% 100%, 12px 100%, 0 54%); font-size: 18px; padding: 0 0 3px 8px; border-radius: 3px; }
    .acts { margin-left: auto; display: flex; gap: 33px; padding-bottom: 2px; }
    .acts button { width: 114px; height: 38px; border: 1px solid #2e90f0; border-radius: 2px; color: #2e90f0; font-size: 19px; line-height: 30px; background: #fff; padding-bottom: 1px; }
    .acts .fill { background: #2e90f0; color: #fff; }
    .work { flex: 1; display: flex; }
    .canvas { flex: 1; min-width: 0; background: #e5e6ee; display: flex; justify-content: center; align-items: flex-start; gap: 21px; padding: 19px 0 28px 90px; box-shadow: inset 0 8px 8px -4px #c9c9d0; }
    .tools { display: grid; gap: 26px; margin-top: 45px; }
    .tool { width: 45px; display: flex; flex-direction: column; align-items: center; gap: 1px; font-size: 18px; line-height: 24px; color: #84889f; }
    .disc { width: 45px; height: 45px; border-radius: 50%; background: #a0a5bc; color: #fff; display: grid; place-items: center; }
    .disc.off { background: #d2d4df; color: #eeeef3; }
    .disc.on { background: #2e90f0; }
  `];
  private tool(name: string, cls: string, glyph: unknown) {
    return html`<button class="tool"><span class="disc ${cls}">${glyph}</span>${name}</button>`;
  }
  render() {
    return html`
      <browser-bar></browser-bar>
      <div class="row">
        <div class="card">
          <component-library></component-library>
          <div class="main">
            <header class="head">
              <button class="ruler">${icon(20, 21, svg`<path d="M1 1.500H19V8.500H8V19.500H1ZM7 5V8M10.500 5V8M14 5V8M4.500 9.500H8M4.500 13H8M4.500 16.500H8" stroke-width="1.300"/>`)}量尺<i></i></button>
              <div class="title">
                <span>我的应用</span>
                <button aria-label="主题">${icon(24, 23, svg`<path d="M8 1.500Q12 5 16 1.500L19 2L23 7.500L19.500 10.500L18.500 9.500V21.500H5.500V9.500L4.500 10.500L1 7.500L5 2Z" stroke-width="1.500" stroke-linejoin="round"/>`)}</button>
                <button class="version">版本历史</button>
              </div>
              <div class="acts"><button>后台管理</button><button>预览</button><button>保存</button><button class="fill">发布</button></div>
            </header>
            <div class="work">
              <div class="canvas">
                <div class="tools">
                  ${this.tool("前进", "off", icon(26, 20, svg`<path d="M15 0L26 9L15 18V13Q6 12 1 19Q2 7 15 5.500Z" fill="currentColor" stroke="none"/>`))}
                  ${this.tool("后退", "", icon(26, 20, svg`<path d="M11 0L0 9L11 18V13Q20 12 25 19Q24 7 11 5.500Z" fill="currentColor" stroke="none"/>`))}
                </div>
                <phone-preview></phone-preview>
                <div class="tools">
                  ${this.tool("模版", "on", icon(20, 22, svg`<path d="M0 0H9V12H0ZM0 14H9V22H0ZM11 0H20V8H11ZM11 10H20V22H11Z" fill="currentColor" stroke="none"/>`))}
                  ${this.tool("组件", "", puzzle(26))}
                </div>
              </div>
              <settings-panel></settings-panel>
            </div>
          </div>
        </div>
        <side-strip></side-strip>
      </div>`;
  }
}
